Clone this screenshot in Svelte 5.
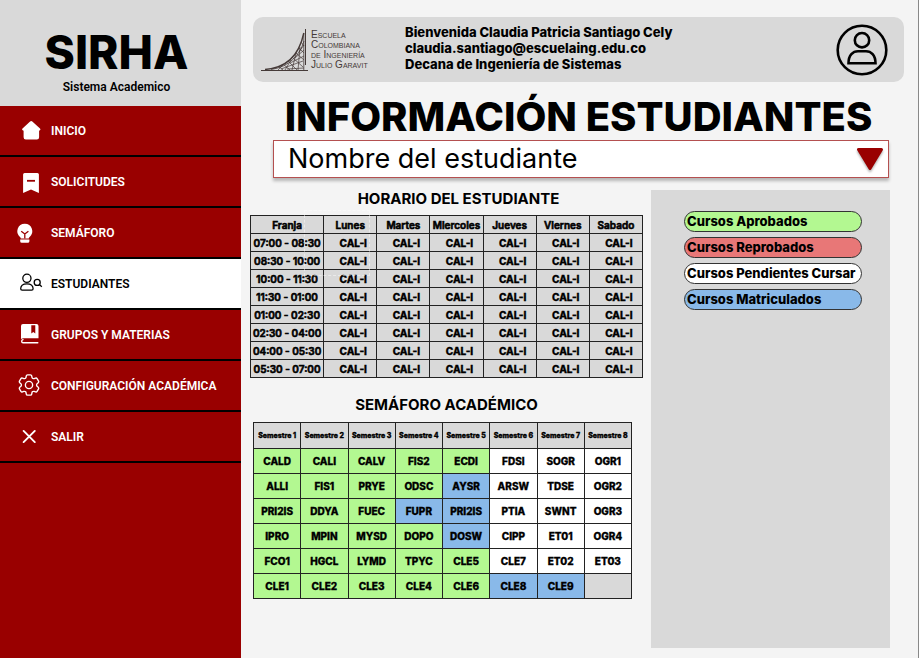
<script>
  const nav = [
    { id: 'home', label: 'INICIO' },
    { id: 'requests', label: 'SOLICITUDES' },
    { id: 'bulb', label: 'SEMÁFORO' },
    { id: 'students', label: 'ESTUDIANTES', active: true },
    { id: 'book', label: 'GRUPOS Y MATERIAS' },
    { id: 'gear', label: 'CONFIGURACIÓN ACADÉMICA' },
    { id: 'exit', label: 'SALIR' }
  ];

  const days = ['Lunes', 'Martes', 'Miercoles', 'Jueves', 'Viernes', 'Sabado'];
  const slots = [
    '07:00 - 08:30', '08:30 - 10:00', '10:00 - 11:30', '11:30 - 01:00',
    '01:00 - 02:30', '02:30 - 04:00', '04:00 - 05:30', '05:30 - 07:00'
  ];

  const semesters = [1, 2, 3, 4, 5, 6, 7, 8];
  // a = aprobado, m = matriculado, p = pendiente, x = sin curso
  const courses = [
    ['CALD a', 'CALI a', 'CALV a', 'FIS2 a', 'ECDI a', 'FDSI p', 'SOGR p', 'OGR1 p'],
    ['ALLI a', 'FIS1 a', 'PRYE a', 'ODSC a', 'AYSR m', 'ARSW p', 'TDSE p', 'OGR2 p'],
    ['PRI2IS a', 'DDYA a', 'FUEC a', 'FUPR m', 'PRI2IS m', 'PTIA p', 'SWNT p', 'OGR3 p'],
    ['IPRO a', 'MPIN a', 'MYSD a', 'DOPO a', 'DOSW m', 'CIPP p', 'ET01 p', 'OGR4 p'],
    ['FCO1 a', 'HGCL a', 'LYMD a', 'TPYC a', 'CLE5 a', 'CLE7 p', 'ET02 p', 'ET03 p'],
    ['CLE1 a', 'CLE2 a', 'CLE3 a', 'CLE4 a', 'CLE6 a', 'CLE8 m', 'CLE9 m', ' x']
  ].map((row) => row.map((cell) => {
    const [code, state] = cell.split(' ');
    return { code, state };
  }));

  const legend = [
    { label: 'Cursos Aprobados', state: 'a' },
    { label: 'Cursos Reprobados', state: 'r' },
    { label: 'Cursos Pendientes Cursar', state: 'p' },
    { label: 'Cursos Matriculados', state: 'm' }
  ];
</script>

<div class="app">
  <aside>
    <div class="brand">
      <strong>SIRHA</strong>
      <span>Sistema Academico</span>
    </div>
    <nav>
      {#each nav as item}
        <a href="#{item.id}" class:active={item.active} aria-current={item.active ? 'page' : undefined}>
          <svg viewBox="0 0 33 33" aria-hidden="true">
            {#if item.id === 'home'}
              <path fill="currentColor" d="M16.1 7.4q1.1-.9 2.2 0L26 14.6q1.2 1.6-.9 2.2v6.5q0 2.2-2.2 2.2H11.8q-2.2 0-2.2-2.2v-6.5q-2.3-.6-1.1-2.2Z" />
            {:else if item.id === 'requests'}
              <path fill="currentColor" d="M10.6 8h12.8q1.5 0 1.5 1.5V28L17 24.4 9.1 28V9.5Q9.1 8 10.6 8Z" />
              <path stroke="#900" stroke-width="1.8" d="M13 15.8h8" />
            {:else if item.id === 'bulb'}
              <path fill="currentColor" d="M10.8 7.800a7.500 7.500 0 0 1 4.600 13.400q-.6.500-.6 1.200H6.800q0-.7-.6-1.200A7.500 7.500 0 0 1 10.800 7.800ZM6.200 23.400h9.200v1.800q0 1.600-1.600 1.600H7.800q-1.600 0-1.600-1.600Z" />
              <path fill="none" stroke="#900" stroke-width="1.300" d="M7.200 15.200 10.800 18l3.600-2.800M10.800 18v4.400" />
            {:else if item.id === 'students'}
              <g fill="none" stroke="currentColor" stroke-width="1.300">
                <circle cx="12.900" cy="11.300" r="4.100" />
                <path d="M6.700 21.800c0-3.400 2.500-5 6.200-5s6.200 1.600 6.200 5q0 1.400-1.400 1.400H8.100q-1.400 0-1.400-1.400Z" />
                <circle cx="23.200" cy="15.400" r="3" />
                <path d="m25.400 17.600 2.400 2.200" />
              </g>
            {:else if item.id === 'book'}
              <path fill="currentColor" fill-rule="evenodd" d="M9 6h13.500q2 0 2 2v12.200H9.600q-1.300 0-2.600.8V8q0-2 2-2Zm8.300 1.300v8.200l2-1.600 2 1.600V7.300Z" />
              <path fill="none" stroke="currentColor" stroke-width="1.400" stroke-linecap="round" d="M23.800 24.800H9q-1.300 0-1.300-1.600 0-1.200 1.300-1.600" />
            {:else if item.id === 'gear'}
              <g fill="none" stroke="currentColor" stroke-width="1.200" transform="translate(1.440 2.440) scale(1.130)">
                <path d="M9.594 3.940c.09-.542.56-.94 1.110-.94h2.593c.55 0 1.020.398 1.110.94l.213 1.281c.063.374.313.686.645.87.074.04.147.083.22.127.325.196.72.257 1.075.124l1.217-.456a1.125 1.125 0 0 1 1.370.49l1.296 2.247a1.125 1.125 0 0 1-.26 1.431l-1.003.827c-.293.241-.438.613-.43.992a7.723 7.723 0 0 1 0 .255c-.008.378.137.75.43.991l1.004.827c.424.35.534.955.26 1.430l-1.298 2.247a1.125 1.125 0 0 1-1.369.491l-1.217-.456c-.355-.133-.75-.072-1.076.124a6.470 6.470 0 0 1-.22.128c-.331.183-.581.495-.644.869l-.213 1.281c-.09.543-.56.94-1.110.94h-2.594c-.55 0-1.019-.398-1.110-.94l-.213-1.281c-.062-.374-.312-.686-.644-.87a6.520 6.520 0 0 1-.22-.127c-.325-.196-.72-.257-1.076-.124l-1.217.456a1.125 1.125 0 0 1-1.369-.49l-1.297-2.247a1.125 1.125 0 0 1 .26-1.431l1.004-.827c.292-.24.437-.613.43-.991a6.932 6.932 0 0 1 0-.255c.007-.38-.138-.751-.43-.992l-1.004-.827a1.125 1.125 0 0 1-.26-1.430l1.297-2.247a1.125 1.125 0 0 1 1.370-.491l1.216.456c.356.133.751.072 1.076-.124.072-.044.146-.086.22-.128.332-.183.582-.495.644-.869l.214-1.280Z" />
                <circle cx="12" cy="12" r="3.200" />
              </g>
            {:else}
              <path fill="none" stroke="currentColor" stroke-width="1.900" stroke-linecap="round" d="m9.600 10.900 11.200 11.200M20.800 10.900 9.600 22.100" />
            {/if}
          </svg>
          {item.label}
        </a>
      {/each}
    </nav>
  </aside>

  <main>
    <header>
      <div class="logo">
        <svg viewBox="0 0 48 46" aria-hidden="true">
          <g fill="none" stroke="#453a38">
            <path stroke-width="1" d="M0 43.500h47M44.500 2v36" />
            <path stroke-width="1.400" d="M4 42.500C24 41 38 29 42.800 6" />
            <path stroke-width=".8" d="M10 42.500C28 40 39 28 43 14M42.800 6v37" />
            <path stroke-width=".7" d="M17 39l5 4M22 37l7 6M27 34l9 9M31 30l11 10M35 26l8 7M38 21l5 5M40 15l3 4M17 43l6-6M24 43l6-10M31 43l4-17M37 43l2-23M20 42l22-8M26 42l17-1M29 36l14-7M34 31l9-8M38 25l5-7" />
          </g>
        </svg>
        <p>Escuela<br />Colombiana<br />de Ingeniería<br />Julio Garavit</p>
      </div>
      <p class="welcome">
        Bienvenida Claudia Patricia Santiago Cely<br />
        claudia.santiago@escuelaing.edu.co<br />
        Decana de Ingeniería de Sistemas
      </p>
      <button class="profile" aria-label="Perfil">
        <svg viewBox="0 0 52 52" aria-hidden="true">
          <g fill="none" stroke="#000" stroke-width="2.600">
            <circle cx="26" cy="26" r="24.300" />
            <circle cx="26" cy="16.200" r="7.200" />
            <path d="M12.500 39.300C12.500 31 17 27.200 22 27.200h8c5 0 9.500 3.800 9.500 12.100Z" />
          </g>
        </svg>
      </button>
    </header>

    <h1>INFORMACIÓN ESTUDIANTES</h1>

    <div class="picker">
      <select aria-label="Nombre del estudiante">
        <option>Nombre del estudiante</option>
      </select>
      <svg viewBox="0 0 28 24" aria-hidden="true">
        <path fill="#900" stroke="#900" stroke-width="3" stroke-linejoin="round" d="M2.500 2.500h23L14 21.500Z" />
      </svg>
    </div>

    <div class="content">
      <div class="tables">
        <section>
          <h2>HORARIO DEL ESTUDIANTE</h2>
          <div class="schedule-wrap">
            <table class="schedule">
              <colgroup>
                <col class="slot" />
                {#each days as _}<col class="day" />{/each}
              </colgroup>
              <thead>
                <tr><th>Franja</th>{#each days as day}<th>{day}</th>{/each}</tr>
              </thead>
              <tbody>
                {#each slots as slot}
                  <tr><th>{slot}</th>{#each days as _}<td>CAL-I</td>{/each}</tr>
                {/each}
              </tbody>
            </table>
            <div class="selection"></div>
          </div>
        </section>
        <section class="progress-section">
          <h2>SEMÁFORO ACADÉMICO</h2>
          <table class="progress">
            <thead>
              <tr>{#each semesters as n}<th>Semestre {n}</th>{/each}</tr>
            </thead>
            <tbody>
              {#each courses as row}
                <tr>{#each row as course}<td class={course.state}>{course.code}</td>{/each}</tr>
              {/each}
            </tbody>
          </table>
        </section>
      </div>

      <div class="panel">
        <ul>
          {#each legend as item}<li class={item.state}>{item.label}</li>{/each}
        </ul>
      </div>
    </div>
  </main>
</div>

<style>
  :global(body) {
    margin: 0;
    background: #f4f4f4;
  }
  .app {
    display: flex;
    min-height: 100vh;
    font-family: Inter, 'Liberation Sans', sans-serif;
    font-weight: 800;
    color: #000;
  }
  aside {
    flex: 0 0 241px;
    background: #900;
    font-family: Roboto, sans-serif;
  }
  .brand {
    display: flex;
    flex-direction: column;
    align-items: center;
    box-sizing: border-box;
    height: 106px;
    padding: 28px 8px 0 0;
    background: #d9d9d9;
    font-size: 12px;
    line-height: 16px;
  }
  .brand strong {
    font: 800 46px/48px Inter, sans-serif;
    margin-bottom: 3px;
  }
  .brand span {
    font-weight: 600;
  }
  nav a {
    display: flex;
    align-items: center;
    gap: 4px;
    height: 49px;
    padding-left: 14px;
    border-bottom: 2px solid #000;
    color: #fff;
    font-size: 12px;
    font-weight: 600;
    text-decoration: none;
  }
  nav a.active {
    background: #fff;
    color: #000;
  }
  nav svg {
    width: 33px;
    height: 33px;
  }
  main {
    flex: 1;
    min-width: 0;
    display: flex;
    flex-direction: column;
    box-sizing: border-box;
    padding: 17px 14px 10px 12px;
    border-right: 1px solid #888;
  }
  header {
    display: flex;
    align-items: center;
    box-sizing: border-box;
    height: 65px;
    padding: 0 16px 0 8px;
    border-radius: 10px;
    background: #d9d9d9;
  }
  p {
    margin: 0;
  }
  .logo {
    display: flex;
    align-items: center;
    gap: 2px;
    flex: 0 0 144px;
  }
  .logo svg {
    width: 48px;
    height: 46px;
  }
  .logo p {
    font: 400 10px/10px 'Liberation Sans', sans-serif;
    font-variant: small-caps;
    color: #453a38;
    white-space: nowrap;
  }
  .welcome {
    flex: 1;
    padding-bottom: 3px;
    font-size: 13px;
    line-height: 16px;
  }
  .profile {
    width: 52px;
    height: 52px;
    padding: 0;
    border: 0;
    background: none;
  }
  .profile svg {
    display: block;
  }
  h1 {
    margin: 12px 0 0;
    font-size: 40px;
    font-weight: 800;
    line-height: 46px;
    text-align: center;
    white-space: nowrap;
  }
  .picker {
    position: relative;
    margin: 0 15px 0 20px;
  }
  select {
    display: block;
    appearance: none;
    box-sizing: border-box;
    width: 100%;
    height: 38px;
    padding: 0 48px 0 14px;
    border: 1px solid #b45050;
    border-radius: 0;
    background: #fff;
    box-shadow: 0 3px 3px rgba(0, 0, 0, 0.25);
    color: #000;
    font: 400 27px/34px Inter, sans-serif;
  }
  .picker svg {
    position: absolute;
    top: 7px;
    right: 5px;
    width: 28px;
    height: 24px;
    pointer-events: none;
    filter: drop-shadow(0 2px 1px rgba(0, 0, 0, 0.3));
  }
  .content {
    flex: 1;
    display: flex;
    justify-content: space-between;
    gap: 8px;
    margin: 12px 14px 0 0;
  }
  .tables {
    flex: 1;
    min-width: 0;
    margin-left: -3px;
  }
  h2 {
    margin: 0;
    padding-left: 24px;
    font-size: 15px;
    font-weight: 700;
    line-height: 18px;
    text-align: center;
  }
  table {
    width: 100%;
    border-collapse: collapse;
    table-layout: fixed;
    font-size: 10px;
    line-height: 12px;
    text-align: center;
  }
  th,
  td {
    padding: 0;
    border: 1px solid #222;
    font-weight: 800;
    white-space: nowrap;
    -webkit-text-stroke: 0.3px #000;
  }
  .schedule-wrap {
    position: relative;
    margin-top: 7px;
  }
  .schedule {
    background: #d9d9d9;
  }
  .schedule th,
  .schedule td {
    height: 17px;
  }
  .schedule th {
    font-weight: 600;
    -webkit-text-stroke-width: 0.6px;
  }
  .schedule td {
    padding-left: 6px;
  }
  .slot {
    width: 73px;
  }
  .day {
    width: 53px;
  }
  .selection {
    position: absolute;
    top: -5px;
    left: 54px;
    width: 64px;
    height: 64px;
    border: 1px dashed rgba(255, 255, 255, 0.45);
  }
  .progress-section {
    margin: 18px 11px 0 3px;
  }
  .progress-section h2 {
    padding-left: 8px;
  }
  .progress {
    margin-top: 8px;
  }
  .progress th {
    height: 25px;
    background: #d9d9d9;
    font-size: 7px;
  }
  .progress td {
    height: 24px;
  }
  .a {
    background: #b3f891;
  }
  .r {
    background: #e87777;
  }
  .p {
    background: #fff;
  }
  .m {
    background: #89b9e9;
  }
  .x {
    background: #d9d9d9;
  }
  .panel {
    box-sizing: border-box;
    flex: 0 0 239px;
    padding: 21px 28px 0 33px;
    background: #d9d9d9;
  }
  ul {
    display: flex;
    flex-direction: column;
    gap: 5px;
    margin: 0;
    padding: 0;
    list-style: none;
  }
  li {
    box-sizing: border-box;
    height: 21px;
    padding-left: 2px;
    border: 1px solid #333;
    border-radius: 11px;
    font-size: 13px;
    line-height: 18px;
    white-space: nowrap;
  }
</style>
